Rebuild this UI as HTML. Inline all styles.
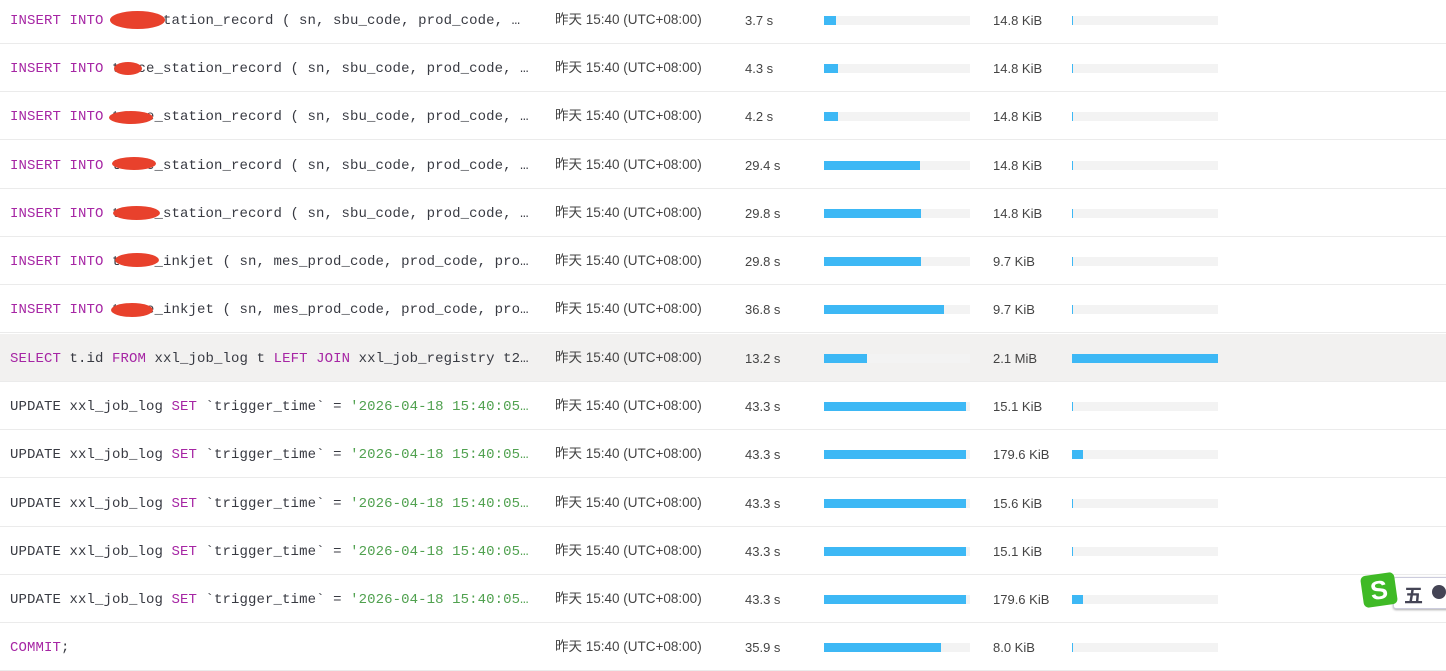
<!DOCTYPE html>
<html><head><meta charset="utf-8"><style>
body{margin:0;width:1446px;height:653px;overflow:hidden;background:#fff;position:relative}
.r{position:absolute;left:0;width:1446px;height:48px;border-bottom:1px solid #ebebeb;box-sizing:border-box}
.r.h{background:#f2f1f0}
.q{position:absolute;left:10px;top:16px;font:14px "Liberation Mono",monospace;color:#383a42;white-space:pre;line-height:18px;letter-spacing:0.1px}
.k{color:#a626a4}.s{color:#50a14f}
.t{position:absolute;left:555px;top:15px;font:13.5px "Liberation Sans","Noto Sans CJK SC",sans-serif;color:#444;line-height:18px}
.d{position:absolute;left:745px;top:17px;font:13px "Liberation Sans",sans-serif;color:#444}
.z{position:absolute;left:993px;top:17px;font:13px "Liberation Sans",sans-serif;color:#444}
.b{position:absolute;top:20px;width:146px;height:9px;background:#f3f3f3}
.b i{display:block;height:9px;background:#3db8f5}
.b1{left:824px}.b2{left:1072px}
.red{position:absolute;background:#e8412c;border-radius:50%}
</style></head><body>

<div class="r" style="top:-4px"><div class="q"><span class="k">INSERT INTO</span> xxxxxstation_record ( sn, sbu_code, prod_code, …</div><div class="t">昨天 15:40 (UTC+08:00)</div><div class="d">3.7 s</div><div class="b b1"><i style="width:12px"></i></div><div class="z">14.8 KiB</div><div class="b b2"><i style="width:1px"></i></div></div>
<div class="r" style="top:44px"><div class="q"><span class="k">INSERT INTO</span> trace_station_record ( sn, sbu_code, prod_code, …</div><div class="t">昨天 15:40 (UTC+08:00)</div><div class="d">4.3 s</div><div class="b b1"><i style="width:14px"></i></div><div class="z">14.8 KiB</div><div class="b b2"><i style="width:1px"></i></div></div>
<div class="r" style="top:92px"><div class="q"><span class="k">INSERT INTO</span> trace_station_record ( sn, sbu_code, prod_code, …</div><div class="t">昨天 15:40 (UTC+08:00)</div><div class="d">4.2 s</div><div class="b b1"><i style="width:14px"></i></div><div class="z">14.8 KiB</div><div class="b b2"><i style="width:1px"></i></div></div>
<div class="r" style="top:141px"><div class="q"><span class="k">INSERT INTO</span> trace_station_record ( sn, sbu_code, prod_code, …</div><div class="t">昨天 15:40 (UTC+08:00)</div><div class="d">29.4 s</div><div class="b b1"><i style="width:96px"></i></div><div class="z">14.8 KiB</div><div class="b b2"><i style="width:1px"></i></div></div>
<div class="r" style="top:189px"><div class="q"><span class="k">INSERT INTO</span> trace_station_record ( sn, sbu_code, prod_code, …</div><div class="t">昨天 15:40 (UTC+08:00)</div><div class="d">29.8 s</div><div class="b b1"><i style="width:97px"></i></div><div class="z">14.8 KiB</div><div class="b b2"><i style="width:1px"></i></div></div>
<div class="r" style="top:237px"><div class="q"><span class="k">INSERT INTO</span> trace_inkjet ( sn, mes_prod_code, prod_code, pro…</div><div class="t">昨天 15:40 (UTC+08:00)</div><div class="d">29.8 s</div><div class="b b1"><i style="width:97px"></i></div><div class="z">9.7 KiB</div><div class="b b2"><i style="width:1px"></i></div></div>
<div class="r" style="top:285px"><div class="q"><span class="k">INSERT INTO</span> trace_inkjet ( sn, mes_prod_code, prod_code, pro…</div><div class="t">昨天 15:40 (UTC+08:00)</div><div class="d">36.8 s</div><div class="b b1"><i style="width:120px"></i></div><div class="z">9.7 KiB</div><div class="b b2"><i style="width:1px"></i></div></div>
<div class="r h" style="top:334px"><div class="q"><span class="k">SELECT</span> t.id <span class="k">FROM</span> xxl_job_log t <span class="k">LEFT JOIN</span> xxl_job_registry t2…</div><div class="t">昨天 15:40 (UTC+08:00)</div><div class="d">13.2 s</div><div class="b b1"><i style="width:43px"></i></div><div class="z">2.1 MiB</div><div class="b b2"><i style="width:146px"></i></div></div>
<div class="r" style="top:382px"><div class="q">UPDATE xxl_job_log <span class="k">SET</span> `trigger_time` = <span class="s">'2026-04-18 15:40:05…</span></div><div class="t">昨天 15:40 (UTC+08:00)</div><div class="d">43.3 s</div><div class="b b1"><i style="width:142px"></i></div><div class="z">15.1 KiB</div><div class="b b2"><i style="width:1px"></i></div></div>
<div class="r" style="top:430px"><div class="q">UPDATE xxl_job_log <span class="k">SET</span> `trigger_time` = <span class="s">'2026-04-18 15:40:05…</span></div><div class="t">昨天 15:40 (UTC+08:00)</div><div class="d">43.3 s</div><div class="b b1"><i style="width:142px"></i></div><div class="z">179.6 KiB</div><div class="b b2"><i style="width:11px"></i></div></div>
<div class="r" style="top:479px"><div class="q">UPDATE xxl_job_log <span class="k">SET</span> `trigger_time` = <span class="s">'2026-04-18 15:40:05…</span></div><div class="t">昨天 15:40 (UTC+08:00)</div><div class="d">43.3 s</div><div class="b b1"><i style="width:142px"></i></div><div class="z">15.6 KiB</div><div class="b b2"><i style="width:1px"></i></div></div>
<div class="r" style="top:527px"><div class="q">UPDATE xxl_job_log <span class="k">SET</span> `trigger_time` = <span class="s">'2026-04-18 15:40:05…</span></div><div class="t">昨天 15:40 (UTC+08:00)</div><div class="d">43.3 s</div><div class="b b1"><i style="width:142px"></i></div><div class="z">15.1 KiB</div><div class="b b2"><i style="width:1px"></i></div></div>
<div class="r" style="top:575px"><div class="q">UPDATE xxl_job_log <span class="k">SET</span> `trigger_time` = <span class="s">'2026-04-18 15:40:05…</span></div><div class="t">昨天 15:40 (UTC+08:00)</div><div class="d">43.3 s</div><div class="b b1"><i style="width:142px"></i></div><div class="z">179.6 KiB</div><div class="b b2"><i style="width:11px"></i></div></div>
<div class="r" style="top:623px"><div class="q"><span class="k">COMMIT</span>;</div><div class="t">昨天 15:40 (UTC+08:00)</div><div class="d">35.9 s</div><div class="b b1"><i style="width:117px"></i></div><div class="z">8.0 KiB</div><div class="b b2"><i style="width:1px"></i></div></div>

<div class="red" style="left:110px;top:11px;width:55px;height:18px"></div>
<div class="red" style="left:114px;top:62px;width:28px;height:13px"></div>
<div class="red" style="left:109px;top:111px;width:44px;height:13px"></div>
<div class="red" style="left:112px;top:157px;width:44px;height:13px"></div>
<div class="red" style="left:113px;top:206px;width:47px;height:14px"></div>
<div class="red" style="left:115px;top:253px;width:44px;height:14px"></div>
<div class="red" style="left:111px;top:303px;width:42px;height:14px"></div>

<div style="position:absolute;left:1393px;top:577px;width:60px;height:30px;background:#fff;border:1px solid #ccd;border-radius:3px;box-shadow:0 1px 2px #aaa"></div>
<div style="position:absolute;left:1362px;top:574px;width:34px;height:32px;background:#3fba26;border-radius:5px;transform:rotate(-8deg);color:#fff;font:bold 26px 'Liberation Sans',sans-serif;text-align:center;line-height:32px">S</div>
<div style="position:absolute;left:1404px;top:581px;font:bold 19px 'Noto Sans CJK SC',sans-serif;color:#445">五</div>
<div style="position:absolute;left:1432px;top:585px;width:14px;height:14px;border-radius:50%;background:#445"></div>
</body></html>
